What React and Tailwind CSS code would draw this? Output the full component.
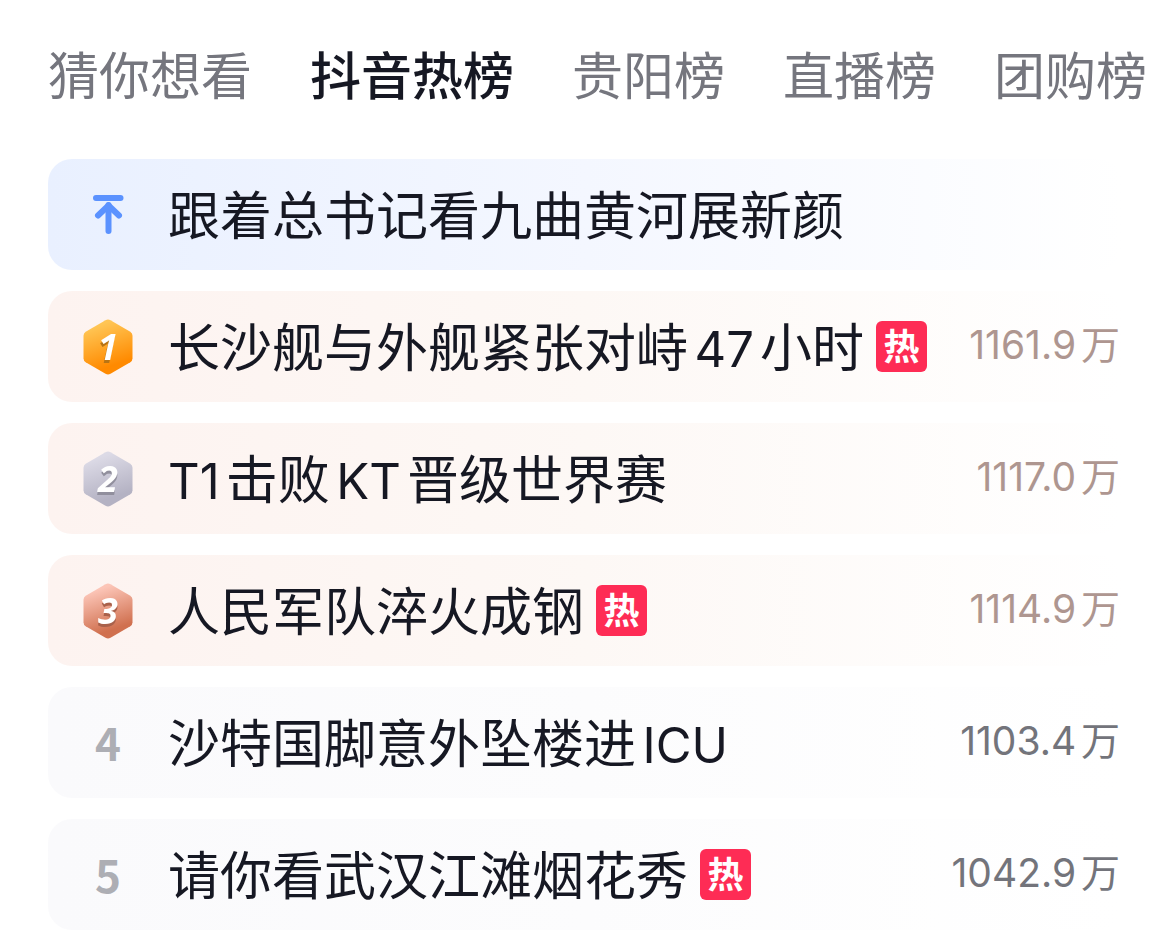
import { useState } from "react";

const tabs = ["猜你想看", "抖音热榜", "贵阳榜", "直播榜", "团购榜"];

const items = [
  { rank: "top", title: "跟着总书记看九曲黄河展新颜" },
  { rank: 1, title: "长沙舰与外舰紧张对峙47小时", hot: true, heat: "1161.9" },
  { rank: 2, title: "T1击败KT晋级世界赛", heat: "1117.0" },
  { rank: 3, title: "人民军队淬火成钢", hot: true, heat: "1114.9" },
  { rank: 4, title: "沙特国脚意外坠楼进ICU", heat: "1103.4" },
  { rank: 5, title: "请你看武汉江滩烟花秀", hot: true, heat: "1042.9" },
];

const medals = {
  1: { from: "#ffc554", to: "#ff8a00", shadow: "[filter:drop-shadow(-1px_3px_0_#b87414)]" },
  2: { from: "#dcdae6", to: "#b4b2c3", shadow: "[filter:drop-shadow(0_3px_0_#918f9d)]" },
  3: { from: "#fcc5b7", to: "#d0704f", shadow: "[filter:drop-shadow(0_3px_0_#a9614b)]" },
};

function PinIcon() {
  return (
    <svg
      width="32"
      height="42"
      viewBox="0 0 32 42"
      fill="none"
      stroke="#5b92ff"
      strokeWidth="6"
      strokeLinecap="round"
      strokeLinejoin="round"
      aria-hidden="true"
    >
      <path d="M4 4H28.500" />
      <path d="M16.500 11V37" />
      <path d="M6 21.500L16.500 11.500L27 21.500" />
    </svg>
  );
}

function Medal({ rank }) {
  const { from, to, shadow } = medals[rank];
  return (
    <svg width="50" height="56" viewBox="0 0 50 56">
      <defs>
        <linearGradient id={`medal-${rank}`} x1="0.3" y1="0" x2="0.6" y2="1">
          <stop offset="0.1" stopColor={from} />
          <stop offset="0.85" stopColor={to} />
        </linearGradient>
      </defs>
      <path
        d="M22.500 1.200Q25 -0.200 27.500 1.200L47.300 12.800Q49.500 14.200 49.500 16.800V39.200Q49.500 41.800 47.300 43.200L27.500 54.800Q25 56.200 22.500 54.800L2.700 43.200Q0.500 41.800 0.500 39.200V16.800Q0.500 14.200 2.700 12.800Z"
        fill={`url(#medal-${rank})`}
      />
      <text
        x="25"
        y="41"
        textAnchor="middle"
        fill="#fff"
        className={`font-['Noto_Sans',sans-serif] text-[36px] font-bold italic ${shadow}`}
      >
        {rank}
      </text>
    </svg>
  );
}

function Rank({ rank }) {
  if (rank === "top") return <PinIcon />;
  if (medals[rank]) return <Medal rank={rank} />;
  return (
    <span className="font-['Noto_Sans_CJK_SC',sans-serif] text-[44px] leading-[63px] font-bold text-[#adaeb4]">
      {rank}
    </span>
  );
}

// Latin letters and digits are set a little smaller than the Chinese text
function Title({ text }) {
  return text.split(/([A-Za-z0-9]+)/).map((part, i) =>
    i % 2 ? (
      <span key={i} className="text-[49px] leading-none">
        {part}
      </span>
    ) : (
      part
    ),
  );
}

function rowBackground(rank) {
  if (rank === "top") return "from-[#e9f0ff] via-[#f4f7ff]";
  if (rank <= 3) return "from-[#fdf3f0] via-[#fdf8f5]";
  return "from-[#fafafc] via-[#fcfcfd]";
}

function Row({ item }) {
  const { rank, title, hot, heat } = item;
  return (
    <li>
      <a
        href="#"
        className={`flex items-center rounded-3xl bg-gradient-to-r to-white py-6 pr-0.5 ${rowBackground(rank)}`}
      >
        <span className="flex w-[120px] shrink-0 justify-center">
          <Rank rank={rank} />
        </span>
        <span className="pt-1 text-[52px] leading-[59px] whitespace-nowrap text-[#161823] [text-autospace:normal]">
          <Title text={title} />
        </span>
        {hot && (
          <span className="ml-3 flex size-[51px] shrink-0 items-center justify-center rounded-md bg-[#fe2c55] pt-0.5 text-[36px] leading-[49px] font-bold text-white">
            热
          </span>
        )}
        {heat && (
          <span
            className={`ml-auto shrink-0 pb-1 text-[39px] leading-[56px] [text-autospace:normal] ${
              rank <= 3 ? "text-[#ae9690]" : "text-[#73747b]"
            }`}
          >
            {heat}万
          </span>
        )}
      </a>
    </li>
  );
}

export default function App() {
  const [active, setActive] = useState("抖音热榜");

  return (
    <main className="bg-white pb-3 font-[Inter,'Noto_Sans_CJK_SC',sans-serif]" lang="zh-CN">
      <nav className="flex gap-[58px] pt-[45px] pl-12">
        {tabs.map((tab) => (
          <button
            key={tab}
            type="button"
            onClick={() => setActive(tab)}
            className={`shrink-0 text-[51px] leading-[63px] whitespace-nowrap ${
              tab === active ? "font-medium text-[#161823]" : "text-[#75767e]"
            }`}
          >
            {tab}
          </button>
        ))}
      </nav>
      <ol className="mt-[51px] flex flex-col gap-[21px] px-12">
        {items.map((item) => (
          <Row key={item.rank} item={item} />
        ))}
      </ol>
    </main>
  );
}
